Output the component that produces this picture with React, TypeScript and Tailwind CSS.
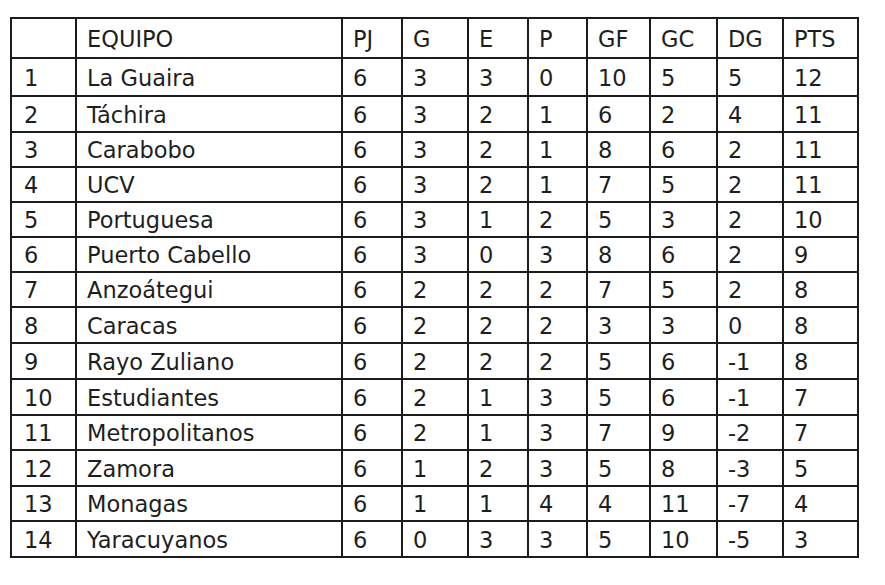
import React from "react";

const header = ["", "EQUIPO", "PJ", "G", "E", "P", "GF", "GC", "DG", "PTS"];

const rows: (string | number)[][] = [
  [1, "La Guaira", 6, 3, 3, 0, 10, 5, 5, 12],
  [2, "Táchira", 6, 3, 2, 1, 6, 2, 4, 11],
  [3, "Carabobo", 6, 3, 2, 1, 8, 6, 2, 11],
  [4, "UCV", 6, 3, 2, 1, 7, 5, 2, 11],
  [5, "Portuguesa", 6, 3, 1, 2, 5, 3, 2, 10],
  [6, "Puerto Cabello", 6, 3, 0, 3, 8, 6, 2, 9],
  [7, "Anzoátegui", 6, 2, 2, 2, 7, 5, 2, 8],
  [8, "Caracas", 6, 2, 2, 2, 3, 3, 0, 8],
  [9, "Rayo Zuliano", 6, 2, 2, 2, 5, 6, -1, 8],
  [10, "Estudiantes", 6, 2, 1, 3, 5, 6, -1, 7],
  [11, "Metropolitanos", 6, 2, 1, 3, 7, 9, -2, 7],
  [12, "Zamora", 6, 1, 2, 3, 5, 8, -3, 5],
  [13, "Monagas", 6, 1, 1, 4, 4, 11, -7, 4],
  [14, "Yaracuyanos", 6, 0, 3, 3, 5, 10, -5, 3],
];

export default function App() {
  const all = [header, ...rows];
  return (
    <div className="w-[885px] h-[585px] bg-white overflow-hidden">
      <div className="ml-[10px] mt-[17px] inline-grid gap-[2px] p-[2px] bg-[#1c1c1c] grid-cols-[63px_264px_58px_64px_58px_57px_61px_65px_64px_73px] grid-rows-[38px_36px_34px_33px_33px_33px_33px_33px_34px_34px_34px_33px_34px_33px_34px]">
        {all.map((r, ri) =>
          r.map((c, ci) => (
            <div
              key={ri + "-" + ci}
              className={
                "bg-white flex items-center pt-[2px] text-[22.5px] leading-none text-[#1e1e1e] whitespace-nowrap " +
                (ci === 0 ? "pl-[12px]" : "pl-[10px]")
              }
              style={{ fontFamily: '"DejaVu Sans", Verdana, sans-serif' }}
            >
              {String(c)}
            </div>
          ))
        )}
      </div>
    </div>
  );
}
